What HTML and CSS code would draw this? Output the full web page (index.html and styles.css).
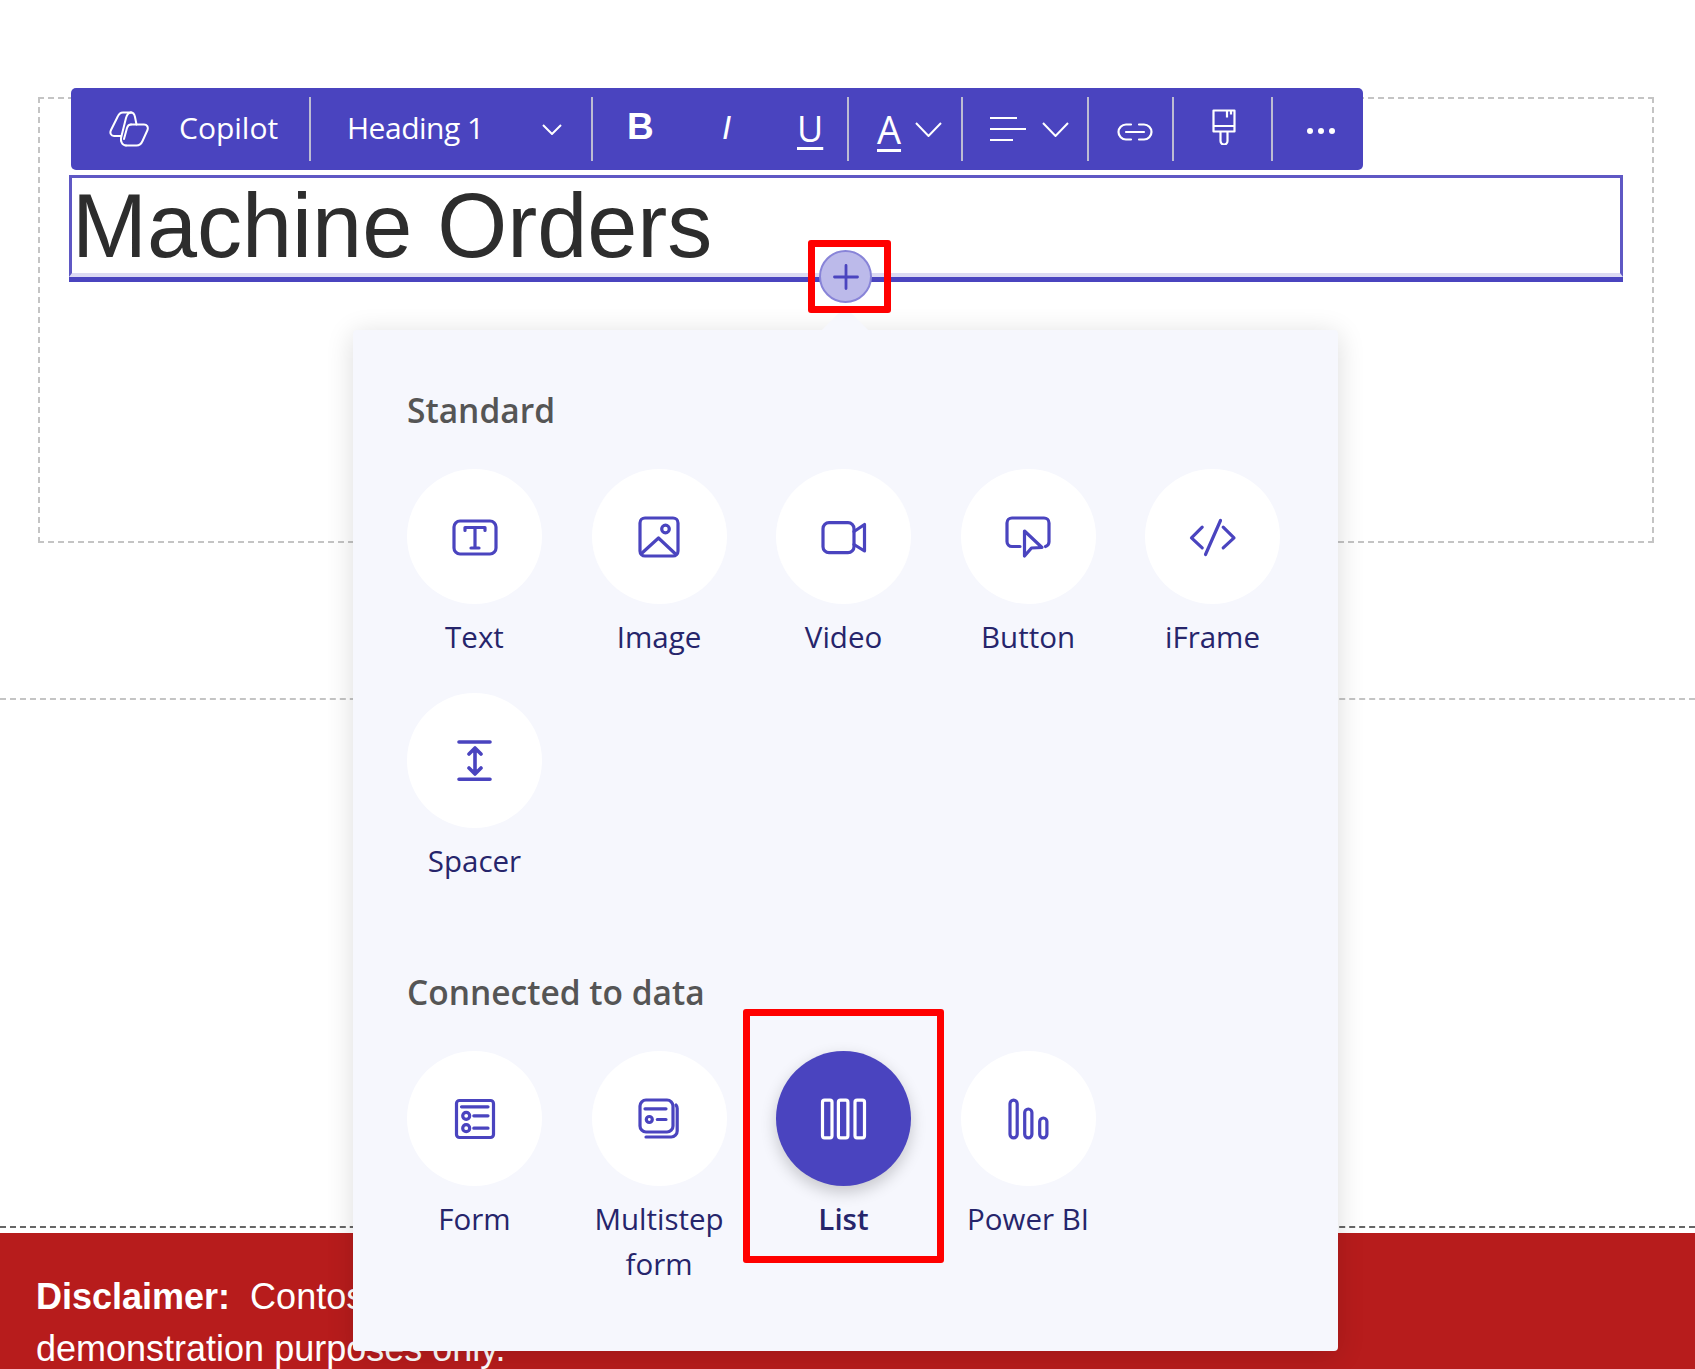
FILE: index.html
```html
<!DOCTYPE html>
<html lang="en">
<head>
    <meta charset="UTF-8">
    <title>Machine Orders</title>
    <link rel="stylesheet" href="styles.css">
</head>
<body>
    <div class="page">
        <section class="hero">
            <div class="hero-box">
                <div class="toolbar">
                    <div class="tb-group tb-copilot">
                        <svg class="copilot-icon" viewBox="0 0 40 36" width="40" height="36" fill="none" stroke="#fff" stroke-width="2" stroke-linejoin="round" stroke-linecap="round">
                            <path d="M22 1.500H14C11 1.500 9.500 3.500 8.500 6L2 19C.5 22 2 25 5 25h7"/>
                            <path d="M22 1.500c2.500 0 3.500 2 4 4.500l1.500 7.500"/>
                            <path d="M22 1.500c-3 0-4 2-5 5.500L12 27c-.5 3 1 7.500 5 7.500"/>
                            <path d="M22 13.500h13c3 0 4.500 2.500 3.500 5.500l-5 11c-1.500 3.500-3 4.500-6 4.500H17"/>
                            <path d="M22 13.500c-2.500 0-3.500 1.500-4 3.500l-3 11"/>
                        </svg>
                        <span>Copilot</span>
                    </div>
                    <div class="tb-group tb-heading">
                        <span class="heading-name">Heading 1</span>
                        <svg class="chev-sm" viewBox="0 0 20 11" width="20" height="11"><path d="M1 1l9 9 9-9"/></svg>
                    </div>
                    <div class="tb-group tb-format">
                        <b class="fmt-b">B</b>
                        <i class="fmt-i">I</i>
                        <u class="fmt-u">U</u>
                    </div>
                    <div class="tb-group tb-color">
                        <span class="fmt-a">A</span>
                        <svg class="chev" viewBox="0 0 27 15" width="27" height="15"><path d="M1 1l12.500 13L26 1"/></svg>
                    </div>
                    <div class="tb-group tb-align">
                        <svg viewBox="0 0 36 24" width="36" height="24" fill="none" stroke="#fff" stroke-width="2"><path d="M0 1h27M0 12h36M0 23h23"/></svg>
                        <svg class="chev" viewBox="0 0 27 15" width="27" height="15"><path d="M1 1l12.500 13L26 1"/></svg>
                    </div>
                    <div class="tb-group tb-link">
                        <svg viewBox="0 0 36 18" width="36" height="18" fill="none" stroke="#fff" stroke-width="2.200" stroke-linecap="round"><path d="M14 1.500H9a7.500 7.500 0 0 0 0 15h5M22 1.500h5a7.500 7.500 0 0 1 0 15h-5M9 9h18"/></svg>
                    </div>
                    <div class="tb-group tb-brush">
                        <svg viewBox="0 0 24 36" width="24" height="36" fill="none" stroke="#fff" stroke-width="2.200" stroke-linejoin="round"><path d="M1.500 1.500h21v21h-21zM1.500 17h21M8.500 22.500v9.500a3.500 3.500 0 0 0 7 0v-9.500M15 1.500v7M19 1.500v4"/></svg>
                    </div>
                    <div class="tb-group tb-more">
                        <span class="dot"></span><span class="dot"></span><span class="dot"></span>
                    </div>
                </div>
                <div class="title-box">
                    <h1>Machine Orders</h1>
                </div>
                <div class="title-line"></div>
            </div>
        </section>
        <section class="blank"></section>
        <footer class="disclaimer">
            <p><b>Disclaimer:</b>&nbsp; Contoso<br>demonstration purposes only.</p>
        </footer>
    </div>

    <button class="add-btn">
        <svg viewBox="0 0 26 26" width="26" height="26" fill="none" stroke="#4a44bf" stroke-width="2.800" stroke-linecap="round"><path d="M13 1.500v23M1.500 13h23"/></svg>
    </button>
    <div class="mark mark-add"></div>

    <div class="panel">
        <div class="panel-arrow"></div>
        <h2>Standard</h2>
        <div class="items">
            <div class="item">
                <div class="circle"><svg class="ic" viewBox="0 0 48 48"><rect x="3" y="8" width="42" height="33" rx="6"/><path d="M14 17.500v-3h20v3M24 14.500v20.500M20 35h8"/></svg></div>
                <div class="label">Text</div>
            </div>
            <div class="item">
                <div class="circle"><svg class="ic" viewBox="0 0 48 48"><rect x="5" y="5" width="38" height="38" rx="5"/><circle cx="30.500" cy="16" r="3.800"/><path d="M6.500 40.500L23.500 25 40 40.500"/></svg></div>
                <div class="label">Image</div>
            </div>
            <div class="item">
                <div class="circle"><svg class="ic" viewBox="0 0 48 48"><rect x="3" y="9.700" width="31" height="30" rx="6"/><path d="M34 18.500l10.500-7V38L34 31.500"/></svg></div>
                <div class="label">Video</div>
            </div>
            <div class="item">
                <div class="circle"><svg class="ic" viewBox="0 0 48 48"><path d="M16 33.500H8a5 5 0 0 1-5-5V10a5 5 0 0 1 5-5h32a5 5 0 0 1 5 5v19a5 5 0 0 1-3.500 4.500"/><path d="M20.500 18L38 34.500l-10.500.5-7 8z"/></svg></div>
                <div class="label">Button</div>
            </div>
            <div class="item">
                <div class="circle"><svg class="ic" viewBox="0 0 48 48"><path d="M13.200 14.200L2.500 24.800l10.700 10M34.200 14.200l10.800 10.600-10.800 10M31.500 7.500l-15 34"/></svg></div>
                <div class="label">iFrame</div>
            </div>
            <div class="item">
                <div class="circle"><svg class="ic ic-heavy" viewBox="0 0 48 48"><path d="M8 5h31M8 42.200h31M24 11.500v25M18 17l6-6 6 6M18 31l6 6 6-6"/></svg></div>
                <div class="label">Spacer</div>
            </div>
        </div>
        <h2 class="second">Connected to data</h2>
        <div class="items">
            <div class="item">
                <div class="circle"><svg class="ic" viewBox="0 0 48 48"><rect x="5.500" y="5.500" width="37" height="37" rx="3"/><path d="M10.500 11.800H37M22.800 20.800H37M22.800 33.200H37"/><circle cx="15.200" cy="20.800" r="3.500"/><circle cx="15.200" cy="33.200" r="3.500"/></svg></div>
                <div class="label">Form</div>
            </div>
            <div class="item">
                <div class="circle"><svg class="ic" viewBox="0 0 48 48"><rect x="5" y="5" width="33" height="32" rx="6"/><path d="M41 10c.8 1 1.200 2 1.200 3.500V36a6 6 0 0 1-6 6H11M10 13.800h21M22.300 24.500H31"/><circle cx="14.300" cy="24.500" r="3"/></svg></div>
                <div class="label">Multistep form</div>
            </div>
            <div class="item active">
                <div class="circle"><svg class="ic" viewBox="0 0 48 48"><rect x="2.500" y="5.200" width="9.500" height="37.600" rx="2"/><rect x="18.400" y="5.200" width="9.500" height="37.600" rx="2"/><rect x="35" y="5.200" width="9.500" height="37.600" rx="2"/></svg></div>
                <div class="label">List</div>
            </div>
            <div class="item">
                <div class="circle"><svg class="ic" viewBox="0 0 48 48"><rect x="6" y="5.200" width="7.200" height="37.600" rx="3.600"/><rect x="20.700" y="14" width="7.200" height="28.800" rx="3.600"/><rect x="35.700" y="23" width="7.200" height="19.800" rx="3.600"/></svg></div>
                <div class="label">Power BI</div>
            </div>
        </div>
    </div>
    <div class="mark mark-list"></div>
</body>
</html>
```

FILE: styles.css
```css
html, body {
    margin: 0;
    height: 100%;
    overflow: hidden;
    background: #fff;
}
body {
    font-family: "Open Sans", sans-serif;
    position: relative;
}
.page {
    display: flex;
    flex-direction: column;
    height: 1369px;
}
.hero {
    flex: none;
    height: 700px;
    box-sizing: border-box;
    padding: 97px 41px 0 38px;
    border-bottom: 2px dashed #c4c4c4;
}
.hero-box {
    height: 446px;
    box-sizing: border-box;
    border: 2px dashed #c4c4c4;
    padding: 0 29px;
}
.toolbar {
    display: flex;
    align-items: center;
    margin: -11px 260px 0 2px;
    height: 82px;
    background: #4a44bf;
    border-radius: 5px;
    color: #fff;
    font-size: 30px;
    padding: 9px 0;
    box-sizing: border-box;
}
.tb-group {
    display: flex;
    align-items: center;
    height: 100%;
    border-right: 2px solid #bdbcd2;
    box-sizing: border-box;
}
.tb-group span {
    margin-top: -4px;
}
.tb-copilot {
    width: 240px;
    padding-left: 38px;
    gap: 30px;
}
.tb-heading {
    width: 282px;
    padding-left: 36px;
    justify-content: space-between;
    padding-right: 29px;
}
.heading-name {
    letter-spacing: -0.5px;
}
.tb-format {
    width: 256px;
    padding-left: 34px;
    font-family: "Liberation Sans", sans-serif;
    font-size: 37px;
}
.fmt-b { width: 95px; margin-top: -4px; }
.fmt-i { width: 75px; font-size: 33px; margin-top: -2px; }
.fmt-u {
    font-family: "Open Sans", sans-serif;
    font-size: 36px;
    line-height: 1;
    text-underline-offset: 5px;
    text-decoration-thickness: 3px;
}
.tb-color {
    width: 114px;
    padding-left: 28px;
    gap: 14px;
}
.tb-group .fmt-a {
    font-size: 38px;
    line-height: 1;
    margin-top: 0;
    text-decoration: underline;
    text-underline-offset: 5px;
    text-decoration-thickness: 3px;
}
.tb-align {
    width: 126px;
    padding-left: 27px;
    gap: 16px;
}
.tb-link {
    width: 85px;
    padding: 6px 0 0 28px;
}
.tb-brush {
    width: 99px;
    padding: 0 0 4px 38px;
}
.tb-more {
    border-right: 0;
    padding: 3px 0 0 34px;
    gap: 5px;
}
.tb-group .dot {
    width: 6px;
    height: 6px;
    margin: 0;
    border-radius: 50%;
    background: #fff;
}
.chev, .chev-sm {
    fill: none;
    stroke: #fff;
    stroke-width: 2;
}
.title-box {
    margin-top: 5px;
    height: 102px;
    box-sizing: border-box;
    border: 3px solid #5f58c4;
    border-bottom: 4px solid #dcdaf3;
}
.title-box h1 {
    margin: 0;
    font-family: "Liberation Sans", sans-serif;
    font-weight: 400;
    font-size: 90px;
    line-height: 97px;
    color: #2d2d2d;
}
.title-line {
    height: 5px;
    background: #4a44bf;
}
.blank {
    flex: none;
    height: 528px;
    box-sizing: border-box;
    border-bottom: 2px dashed #666;
}
.disclaimer {
    margin-top: 5px;
    flex: 1;
    background: #b71c1c;
    color: #fff;
    font-family: "Liberation Sans", sans-serif;
    font-size: 36px;
    line-height: 52px;
    padding: 0 36px;
}
.disclaimer p {
    margin: 0;
    padding-top: 38px;
}
.add-btn {
    position: absolute;
    left: 819px;
    top: 250px;
    width: 53px;
    height: 53px;
    border-radius: 50%;
    border: 2px solid #8884d8;
    background: #bcbaea;
    padding: 0;
    display: flex;
    align-items: center;
    justify-content: center;
    box-sizing: border-box;
}
.mark {
    position: absolute;
    box-sizing: border-box;
    border: 7px solid #f00;
    border-radius: 3px;
    z-index: 5;
}
.mark-add {
    left: 808px;
    top: 240px;
    width: 83px;
    height: 73px;
}
.mark-list {
    left: 743px;
    top: 1009px;
    width: 201px;
    height: 254px;
}
.panel {
    position: absolute;
    left: 353px;
    top: 330px;
    width: 985px;
    height: 1021px;
    box-sizing: border-box;
    padding: 58px 54px 0;
    background: #f6f7fd;
    border-radius: 4px;
    box-shadow: 0 4px 28px rgba(0, 0, 0, 0.14);
}
.panel-arrow {
    position: absolute;
    left: 474px;
    top: -16px;
    width: 36px;
    height: 36px;
    background: #f6f7fd;
    transform: rotate(45deg);
    clip-path: polygon(0 0, 100% 0, 0 100%);
}
.panel h2 {
    margin: 0 0 36px;
    font-size: 33.5px;
    line-height: 45px;
    font-weight: 600;
    color: #555;
}
.panel h2.second {
    margin: 87px 0 36px;
}
.items {
    display: grid;
    grid-template-columns: repeat(5, 135px);
    column-gap: 49.5px;
    row-gap: 34px;
}
.item {
    display: flex;
    flex-direction: column;
    align-items: center;
    text-align: center;
}
.circle {
    width: 135px;
    height: 135px;
    border-radius: 50%;
    background: #fff;
    display: flex;
    align-items: center;
    justify-content: center;
}
.label {
    margin-top: 10px;
    font-size: 29.5px;
    line-height: 45px;
    color: #26256b;
}
.ic {
    width: 48px;
    height: 48px;
    fill: none;
    stroke: #4a44bf;
    stroke-width: 3.2;
    stroke-linecap: round;
    stroke-linejoin: round;
}
.ic-heavy {
    stroke-width: 3.600;
}
.active .circle {
    background: #4a44bf;
    box-shadow: 0 6px 16px rgba(0, 0, 0, 0.2);
}
.active .ic { stroke: #fff; }
.active .label { font-weight: 600; }
```
